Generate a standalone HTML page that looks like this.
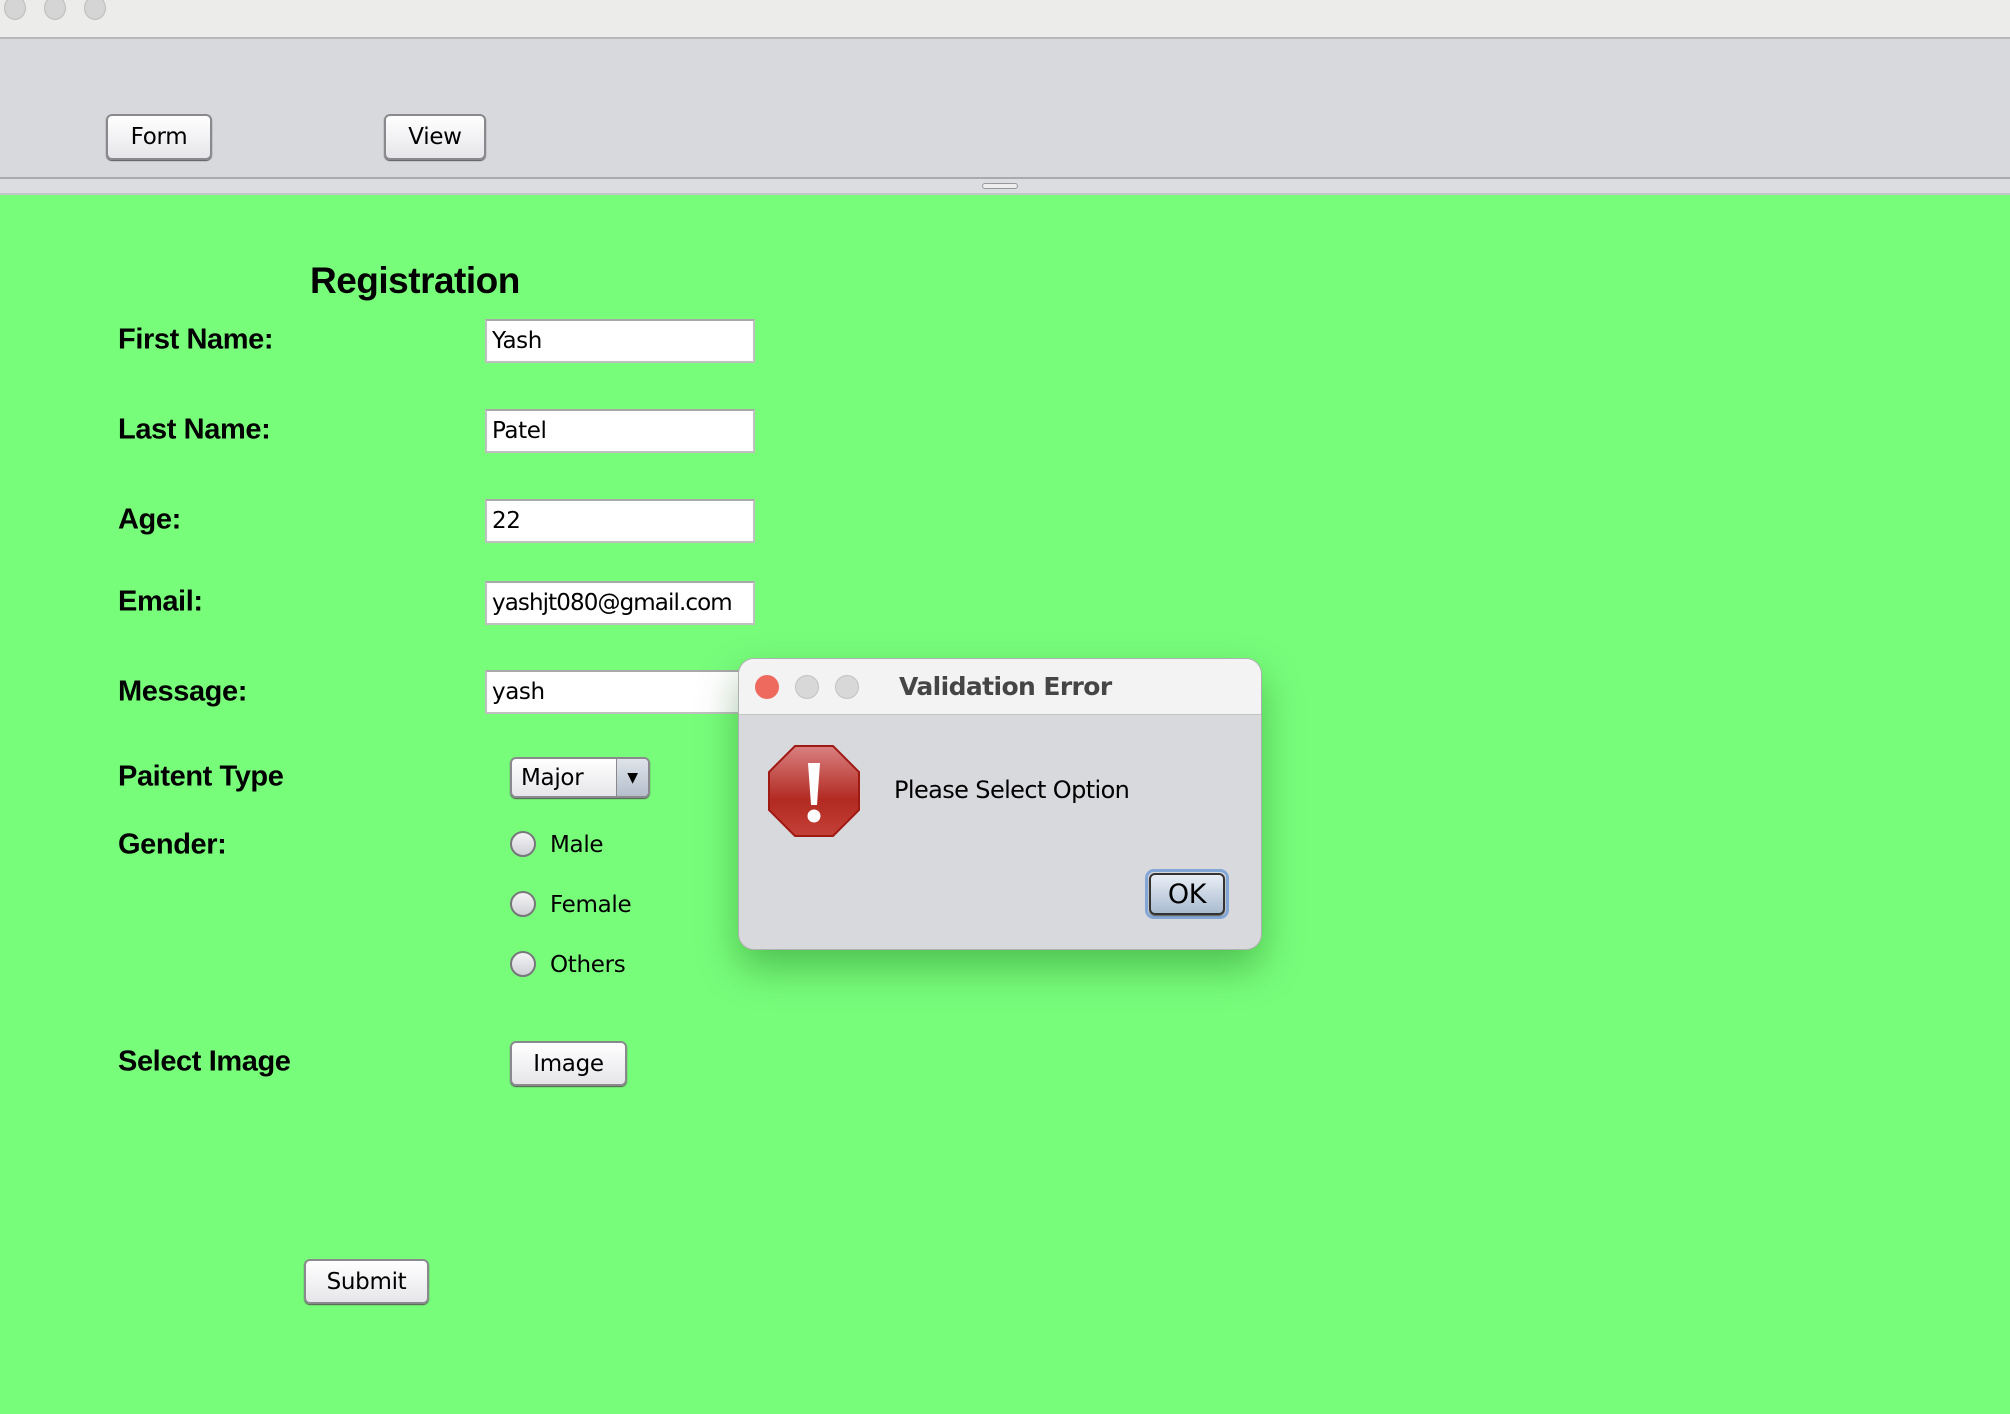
<!DOCTYPE html>
<html><head><style>
*{margin:0;padding:0;box-sizing:border-box}
body{width:2010px;height:1414px;overflow:hidden;background:#78fd7b;position:relative;font-family:"DejaVu Sans","Liberation Sans",sans-serif}
.a{position:absolute}
.tb{left:0;top:0;width:2010px;height:39px;background:#ececea;border-bottom:2px solid #b8b8bc}
.tl{width:22px;height:24px;border-radius:50%;background:#d5d5d5;border:1px solid #bdbdbd;top:-4px}
.tool{left:0;top:39px;width:2010px;height:140px;background:#d8d9dd;border-bottom:2px solid #a9aaae}
.div{left:0;top:179px;width:2010px;height:16px;background:#dcdde1;border-bottom:2px solid #c4c5c9}
.btn{background:linear-gradient(#fff,#e6e6ea);border:2px solid #8a8a8e;border-radius:6px;box-shadow:0 1px 1px #555;font-size:23px;color:#000;display:flex;align-items:center;justify-content:center;letter-spacing:-0.3px}
.lbl{font-family:"Liberation Sans",sans-serif;font-weight:bold;font-size:29px;left:118px;transform:translateY(-50%);letter-spacing:-0.4px}
.fld{left:485px;width:270px;height:44px;background:#fff;border:2px solid #c0c0c0;border-top-color:#a8a8a8;font-size:23px;padding-left:5px;display:flex;align-items:center;letter-spacing:-0.4px;overflow:hidden;white-space:nowrap}
.rad{width:26px;height:26px;border-radius:50%;background:linear-gradient(#f4f4f6,#d0d1d6);border:2px solid #77777b;left:510px}
.rl{left:550px;font-size:23px;transform:translateY(-50%);letter-spacing:-0.3px}
</style></head><body>
<div class="a tb"></div>
<div class="a tl" style="left:4px"></div>
<div class="a tl" style="left:44px"></div>
<div class="a tl" style="left:84px"></div>
<div class="a tool"></div>
<div class="a div"></div>
<div class="a" style="left:982px;top:183px;width:36px;height:6px;border:1px solid #999;border-radius:3px;background:#eee"></div>
<div class="a btn" style="left:106px;top:114px;width:106px;height:46px">Form</div>
<div class="a btn" style="left:384px;top:114px;width:102px;height:46px">View</div>

<div class="a" style="left:310px;top:260px;font-family:'Liberation Sans',sans-serif;font-weight:bold;font-size:37px;letter-spacing:-0.5px">Registration</div>

<div class="a lbl" style="top:340px">First Name:</div>
<div class="a lbl" style="top:430px">Last Name:</div>
<div class="a lbl" style="top:520px">Age:</div>
<div class="a lbl" style="top:602px">Email:</div>
<div class="a lbl" style="top:692px">Message:</div>
<div class="a lbl" style="top:777px">Paitent Type</div>
<div class="a lbl" style="top:845px">Gender:</div>
<div class="a lbl" style="top:1062px">Select Image</div>

<div class="a fld" style="top:319px">Yash</div>
<div class="a fld" style="top:409px">Patel</div>
<div class="a fld" style="top:499px">22</div>
<div class="a fld" style="top:581px;letter-spacing:-0.9px">yashjt080@gmail.com</div>
<div class="a fld" style="top:670px">yash</div>

<div class="a btn" style="left:510px;top:757px;width:140px;height:41px;justify-content:flex-start;padding-left:9px;overflow:hidden">Major
<div class="a" style="right:0;top:0;width:32px;height:100%;background:linear-gradient(#dfe3ea,#b5bfcc);border-left:1px solid #8a8a8e;display:flex;align-items:center;justify-content:center;font-size:14px">▼</div></div>

<div class="a rad" style="top:831px"></div><div class="a rl" style="top:845px">Male</div>
<div class="a rad" style="top:891px"></div><div class="a rl" style="top:905px">Female</div>
<div class="a rad" style="top:951px"></div><div class="a rl" style="top:965px">Others</div>

<div class="a btn" style="left:510px;top:1041px;width:117px;height:45px">Image</div>
<div class="a btn" style="left:304px;top:1259px;width:125px;height:45px">Submit</div>

<div class="a" style="left:738px;top:658px;width:524px;height:292px;background:#d8d9dd;border-radius:16px;border:1px solid #b0b0b0;box-shadow:0 18px 40px rgba(0,80,0,0.35);overflow:hidden">
 <div class="a" style="left:0;top:0;width:100%;height:56px;background:#f3f3f3;border-bottom:1px solid #c4c4c4"></div>
 <div class="a" style="left:16px;top:16px;width:24px;height:24px;border-radius:50%;background:#ee6a5f"></div>
 <div class="a" style="left:56px;top:16px;width:24px;height:24px;border-radius:50%;background:#d8d8d8;border:1px solid #c2c2c2"></div>
 <div class="a" style="left:96px;top:16px;width:24px;height:24px;border-radius:50%;background:#d8d8d8;border:1px solid #c2c2c2"></div>
 <div class="a" style="left:160px;top:13px;font-weight:bold;font-size:25px;color:#454545;letter-spacing:-0.6px">Validation Error</div>
 <svg class="a" style="left:29px;top:86px" width="92" height="92" viewBox="0 0 92 92">
  <defs><linearGradient id="g" x1="0" y1="0" x2="0" y2="1"><stop offset="0" stop-color="#d98080"/><stop offset="0.6" stop-color="#b22a22"/><stop offset="1" stop-color="#c44038"/></linearGradient></defs>
  <polygon points="27,1 65,1 91,27 91,65 65,91 27,91 1,65 1,27" fill="url(#g)" stroke="#a01a14" stroke-width="2"/>
  <path d="M40,18 L52,18 L49,60 L43,60 Z" fill="#fff"/>
  <circle cx="46" cy="71" r="6.5" fill="#fff"/>
 </svg>
 <div class="a" style="left:155px;top:117px;font-size:24px;letter-spacing:-0.6px">Please Select Option</div>
 <div class="a" style="left:406px;top:210px;width:84px;height:50px;border-radius:9px;border:3px solid #82a6d6;"></div>
 <div class="a btn" style="left:410px;top:214px;width:76px;height:42px;background:linear-gradient(#e9eef5,#a9bbd0);border-color:#333;font-size:27px">OK</div>
</div>
</body></html>
